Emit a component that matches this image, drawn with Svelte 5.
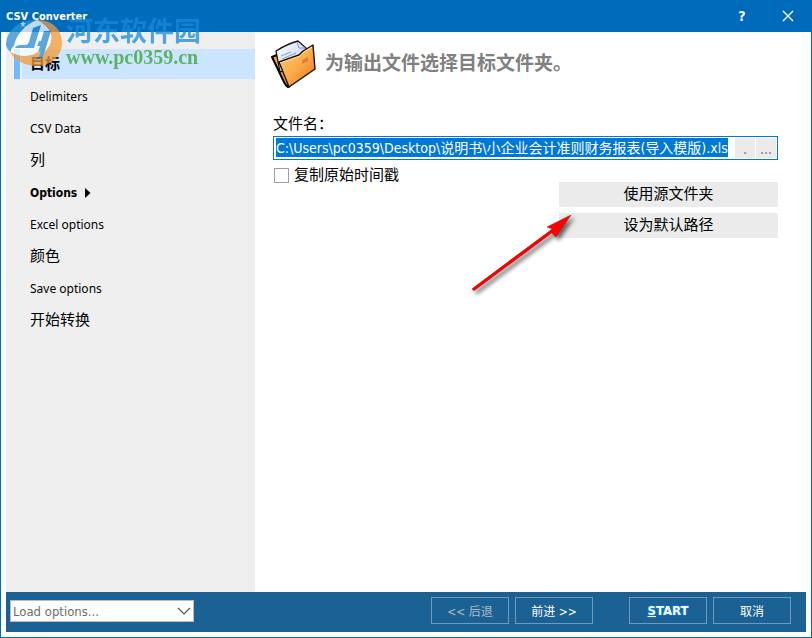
<script>
	import { onMount } from "svelte";

	const pages = [
		{ label: "目标", cjk: true, current: true },
		{ label: "Delimiters" },
		{ label: "CSV Data" },
		{ label: "列", cjk: true },
		{ label: "Options", group: true },
		{ label: "Excel options" },
		{ label: "颜色", cjk: true },
		{ label: "Save options" },
		{ label: "开始转换", cjk: true },
	];

	let fileName = $state("C:\\Users\\pc0359\\Desktop\\说明书\\小企业会计准则财务报表(导入模版).xls");
	let keepTimestamp = $state(false);
	let fileInput;

	onMount(() => {
		fileInput.focus();
		fileInput.select();
	});
</script>

<div class="window">
	<header class="titlebar">
		<h1>CSV Converter</h1>
		<button class="caption" aria-label="Help">?</button>
		<button class="caption" aria-label="Close">
			<svg width="12" height="12" viewBox="0 0 12 12">
				<path d="M1 1L11 11M11 1L1 11" stroke="#fff" stroke-width="1.4" />
			</svg>
		</button>
	</header>

	<div class="body">
		<nav class="sidebar">
			{#each pages as page}
				<a
					href="#{page.label}"
					class:cjk={page.cjk}
					class:current={page.current}
					class:group={page.group}
				>
					{page.label}
					{#if page.group}
						<svg width="6" height="10" viewBox="0 0 6 10"><path d="M0 0L5.5 5L0 10Z" /></svg>
					{/if}
				</a>
			{/each}
		</nav>

		<main>
			<div class="heading">
				<svg width="46" height="50" viewBox="0 0 46 50">
					<defs>
						<linearGradient id="folder" x1="0" y1="0" x2="1" y2="1">
							<stop offset="0" stop-color="#ffc477" />
							<stop offset="0.5" stop-color="#ffad4c" />
							<stop offset="1" stop-color="#df7417" />
						</linearGradient>
						<linearGradient id="paper" x1="0" y1="0" x2="1" y2="1">
							<stop offset="0" stop-color="#fff" />
							<stop offset="1" stop-color="#b5cdf3" />
						</linearGradient>
					</defs>
					<path d="M1 18L6 16L19 47L17 48Q15 47 13 43Z" fill="#f0a03c" stroke="#000" stroke-width="2" stroke-linejoin="round" />
					<path d="M5 12Q16 5 27 2L36 10L35 25L9 33Z" fill="url(#paper)" stroke="#111" stroke-width="1.3" stroke-linejoin="round" />
					<path d="M26 3L28 9L34 9" fill="#dce9ff" stroke="#8095bd" />
					<path d="M10 17L20 13M11 20L25 14" stroke="#879bbf" />
					<path d="M8 23L28 16L32 12L42 6L44 30L18 48Q14 38 8 23Z" fill="url(#folder)" stroke="#191007" stroke-width="1.4" stroke-linejoin="round" />
					<path d="M9 24L29 17L33 13L41 8" fill="none" stroke="#ffdf9e" />
					<path d="M31 21L37 18V22L31 25Z" fill="#d68332" />
				</svg>
				<h2>为输出文件选择目标文件夹。</h2>
			</div>

			<label class="field-label" for="file-name">文件名：</label>
			<div class="file-field">
				<input id="file-name" type="text" spellcheck="false" bind:value={fileName} bind:this={fileInput} />
				<button aria-label="Current folder">.</button>
				<button aria-label="Browse">...</button>
			</div>

			<label class="check">
				<input type="checkbox" bind:checked={keepTimestamp} />
				<span>复制原始时间戳</span>
			</label>

			<div class="actions">
				<button>使用源文件夹</button>
				<button>设为默认路径</button>
			</div>
		</main>
	</div>

	<footer>
		<div class="select">
			<select aria-label="Load options">
				<option>Load options...</option>
			</select>
			<svg width="14" height="8" viewBox="0 0 14 8">
				<path d="M1 1L7 7L13 1" fill="none" stroke="#555" stroke-width="1.2" />
			</svg>
		</div>
		<div class="steps">
			<button class="back">&lt;&lt; 后退</button>
			<button>前进 &gt;&gt;</button>
		</div>
		<div class="steps">
			<button class="start"><u>S</u>TART</button>
			<button>取消</button>
		</div>
	</footer>

	<div class="watermark">
		<svg width="58" height="50" viewBox="0 0 58 50">
			<path d="M0 26C1 9 15 0 31 1C22 4 11 13 8 27Q5 29 5 33Q1 31 0 26Z" fill="#2b91d8" />
			<path d="M31 1C47 1 56 11 56 24C56 37 45 47 31 47C20 47 9 42 4 33C16 43 34 40 41 30C49 20 46 8 31 1Z" fill="#f49a39" />
			<path d="M8 27C11 14 20 5 31 1C46 8 49 20 41 30C34 40 16 42 5 33Q5 29 8 27Z" fill="#fff" />
			<path d="M27 9L35 6L28 29H9Q10 26 15 26H20Q22 26 23 23ZM38 12H45L37 38L30 41L34 27H31L33 22H35Z" fill="#2b91d8" />
			<path d="M5 33C14 39 27 38 35 31L33 38C22 43 10 40 5 33Z" fill="#f49a39" />
			<path d="M17 2L18 4L20 4L18 6L19 8L17 7L15 8L16 6L14 4H16Z" fill="#d9efff" />
		</svg>
		<div>
			<strong>河东软件园</strong>
			<span>www.pc0359.cn</span>
		</div>
	</div>

	<svg class="arrow" width="110" height="90" viewBox="0 0 110 90">
		<defs>
			<filter id="shadow" x="-20%" y="-20%" width="140%" height="140%">
				<feDropShadow dx="3" dy="3" stdDeviation="2" flood-color="#000" flood-opacity="0.6" />
			</filter>
		</defs>
		<g filter="url(#shadow)">
			<path d="M4 78L86 17" stroke="#922" stroke-width="3.4" stroke-linecap="round" />
			<path d="M101 4L77 16L83 18L82 22L86 26Z" fill="#f00" stroke="#922" stroke-width="0.6" />
			<path d="M4 78L86 17" stroke="#f00" stroke-width="2.6" stroke-linecap="round" />
		</g>
	</svg>
</div>

<style>
	:global(body) {
		margin: 0;
	}

	.window {
		position: relative;
		box-sizing: border-box;
		display: flex;
		flex-direction: column;
		min-height: 100vh;
		padding-bottom: 5px;
		border: 1px solid #0069b9;
		border-top: 0;
		background: #fff;
		color: #000;
		font-family: "Noto Sans", "Noto Sans CJK SC", sans-serif;
		font-size: 12px;
	}

	button,
	input,
	select {
		box-sizing: border-box;
		margin: 0;
		padding: 0;
		border: 0;
		border-radius: 0;
		font: inherit;
		color: inherit;
	}

	h1,
	h2 {
		margin: 0;
	}

	.titlebar {
		display: flex;
		align-items: center;
		height: 32px;
		padding-left: 5px;
		background: #006abb;
		color: #fff;
		font-family: "DejaVu Sans Condensed", sans-serif;
	}

	.titlebar h1 {
		flex: 1;
		font-size: 11px;
	}

	.caption {
		display: grid;
		place-items: center;
		width: 46px;
		height: 32px;
		background: none;
		font-size: 14px;
		font-weight: bold;
	}

	.body {
		flex: 1;
		display: flex;
	}

	.sidebar {
		box-sizing: border-box;
		width: 249px;
		margin-left: 5px;
		padding: 17px 0 0 8px;
		background: #efefef;
	}

	.sidebar a {
		display: flex;
		align-items: center;
		gap: 8px;
		box-sizing: border-box;
		height: 30px;
		margin-bottom: 2px;
		padding: 2px 0 0 16px;
		color: inherit;
		line-height: 16px;
		text-decoration: none;
	}

	.sidebar .cjk {
		padding-top: 0;
		padding-bottom: 2px;
		font-size: 15px;
	}

	.sidebar .group {
		font-family: "DejaVu Sans Condensed", sans-serif;
		font-weight: bold;
	}

	.sidebar .current {
		padding-left: 10px;
		border-left: 6px solid #75b8ff;
		box-shadow: inset 2px 0 #e5f1fd;
		background: #cce5ff;
		font-weight: bold;
	}

	main {
		flex: 1;
		min-width: 0;
		padding: 7px 33px 16px 18px;
		font-size: 15px;
	}

	.heading {
		display: flex;
		align-items: center;
		gap: 8px;
		height: 50px;
		margin-left: -2px;
	}

	.heading svg {
		flex: none;
	}

	.heading h2 {
		padding-bottom: 2px;
		color: #808080;
		font-size: 19px;
		line-height: 24px;
	}

	.field-label {
		display: block;
		margin-top: 24px;
		line-height: 20px;
	}

	.file-field {
		display: flex;
		gap: 1px;
		box-sizing: border-box;
		height: 24px;
		margin-top: 3px;
		padding: 1px;
		border: 1px solid #0078d7;
	}

	.file-field input {
		flex: 1;
		min-width: 0;
		padding: 0 0 2px 1px;
		outline: 0;
		background: #fff;
		font-family: "DejaVu Sans Condensed", "Noto Sans CJK SC", sans-serif;
		font-size: 14px;
	}

	.file-field input::selection {
		background: #0078d7;
		color: #fff;
	}

	.file-field button {
		width: 20px;
		background: #ebebeb;
		color: #888;
		line-height: 18px;
	}

	.check {
		display: flex;
		align-items: center;
		gap: 5px;
		width: max-content;
		margin: 4px 0 0 1px;
		line-height: 22px;
	}

	.check span {
		padding-bottom: 2px;
		line-height: 20px;
	}

	.check input {
		appearance: none;
		width: 15px;
		height: 15px;
		border: 1px solid #a0a0a0;
		background: #fff;
	}

	.check input:checked {
		background: #0078d7;
	}

	.actions {
		display: grid;
		gap: 6px;
		width: 219px;
		margin: -4px 0 0 auto;
	}

	.actions button {
		height: 25px;
		padding-bottom: 3px;
		background: #ebebeb;
		line-height: 22px;
	}

	footer {
		display: flex;
		box-sizing: border-box;
		height: 40px;
		margin: 0 5px;
		padding: 5px 15px 0 4px;
		background: #1b6194;
		color: #fff;
		font-family: "DejaVu Sans Condensed", "Noto Sans CJK SC", sans-serif;
	}

	.select {
		display: grid;
		align-items: center;
		width: 184px;
		height: 22px;
		margin: 3px auto 0 0;
	}

	.select select,
	.select svg {
		grid-area: 1 / 1;
	}

	.select select {
		appearance: none;
		width: 100%;
		height: 22px;
		padding-left: 2px;
		border: 1px solid #bbb;
		background: #fff;
		color: #6d6d6d;
		font-size: 13px;
	}

	.select svg {
		justify-self: end;
		margin-right: 3px;
		pointer-events: none;
	}

	.steps {
		display: flex;
		gap: 6px;
	}

	.steps + .steps {
		margin-left: 36px;
	}

	.steps button {
		width: 78px;
		height: 27px;
		border: 1px solid #6c9bbd;
		background: none;
	}

	.steps .back {
		color: #b0bcc5;
	}

	.steps .start {
		font-size: 13px;
		font-weight: bold;
		text-shadow: 0 0 2px #0080ff, 0 0 2px #0080ff, 0 0 1px #0080ff;
	}

	.watermark {
		position: absolute;
		top: 19px;
		left: 5px;
		display: flex;
		gap: 2px;
		opacity: 0.75;
		pointer-events: none;
	}

	.watermark div {
		display: grid;
		align-content: start;
	}

	.watermark strong {
		color: #178bdc;
		font-size: 27px;
		line-height: 24px;
	}

	.watermark span {
		color: #36a336;
		font-family: "Liberation Serif", serif;
		font-size: 20px;
		font-weight: bold;
		line-height: 28px;
	}

	.arrow {
		position: absolute;
		top: 211px;
		left: 469px;
		pointer-events: none;
	}
</style>
